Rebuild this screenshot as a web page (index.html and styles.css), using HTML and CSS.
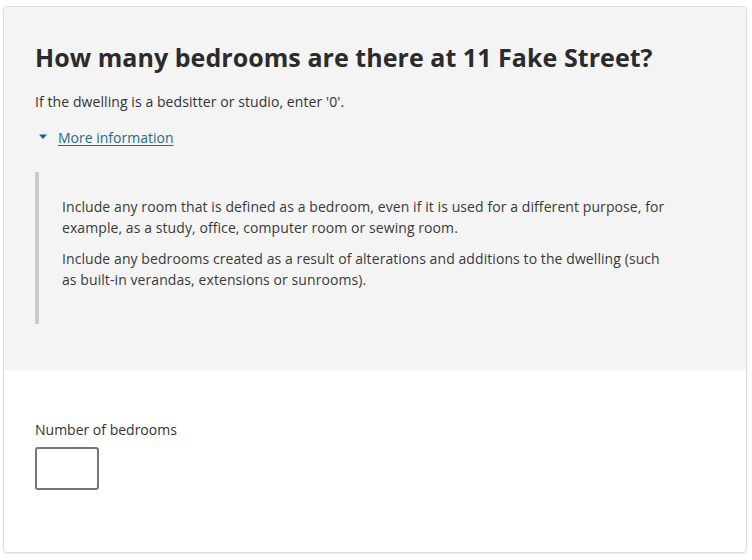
FILE: index.html
```html
<!DOCTYPE html>
<html lang="en">
<head>
<meta charset="utf-8">
<title>Bedrooms</title>
<link rel="stylesheet" href="styles.css">
</head>
<body>
<main class="card">
  <section class="question">
    <h1 class="title">How many bedrooms are there at 11 Fake Street?</h1>
    <p class="hint">If the dwelling is a bedsitter or studio, enter '0'.</p>
    <div class="details">
      <div class="summary">
        <svg class="caret" width="8" height="6" viewBox="0 0 8 6"><path d="M0 0.5h8L4 5z" fill="#1f5f7f"/></svg>
        <a class="more-link" href="#">More information</a>
      </div>
      <div class="panel">
        <p>Include any room that is defined as a bedroom, even if it is used for a different purpose, for example, as a study, office, computer room or sewing room.</p>
        <p>Include any bedrooms created as a result of alterations and additions to the dwelling (such as built-in verandas, extensions or sunrooms).</p>
      </div>
    </div>
  </section>
  <section class="answer">
    <label class="label" for="bedrooms">Number of bedrooms</label>
    <input class="field" id="bedrooms" type="text">
  </section>
</main>
</body>
</html>
```

FILE: styles.css
```css
html, body {
  margin: 0;
  padding: 0;
  background: #ffffff;
}
body {
  padding: 6px 5px 7px 3px;
  font-family: "Open Sans", "Noto Sans", sans-serif;
  color: #333333;
}
.card {
  height: 545px;
  border: 1px solid #dcdcdc;
  border-radius: 4px;
  box-shadow: 0 1px 2px rgba(0,0,0,0.08);
  display: flex;
  flex-direction: column;
  overflow: hidden;
}
.question {
  background: #f4f4f4;
  padding: 35px 31px 46px 31px;
}
.title {
  margin: 0;
  font-size: 25px;
  line-height: 30px;
  font-weight: 700;
  color: #2b2b2b;
  letter-spacing: 0.05px;
}
.hint {
  margin: 20px 0 0 0;
  font-size: 14px;
  line-height: 20px;
  letter-spacing: 0.08px;
}
.details {
  margin-top: 15px;
}
.summary {
  display: flex;
  align-items: center;
  gap: 11px;
  padding-left: 4px;
  height: 20px;
}
.caret {
  display: block;
}
.more-link {
  font-size: 14px;
  color: #1f6b8a;
  text-decoration: underline;
  text-underline-offset: 2px;
}
.panel {
  margin-top: 25px;
  border-left: 4px solid #cccccc;
  padding: 24px 50px 34px 23px;
}
.panel p {
  margin: 0 0 10px 0;
  font-size: 14px;
  line-height: 21px;
  color: #3a3a3a;
  letter-spacing: 0.08px;
}
.panel p:last-child {
  margin-bottom: 0;
}
.answer {
  padding: 50px 31px 0 31px;
  display: flex;
  flex-direction: column;
  align-items: flex-start;
}
.label {
  font-size: 14px;
  line-height: 20px;
  color: #333333;
}
.field {
  margin-top: 7px;
  width: 64px;
  height: 43px;
  box-sizing: border-box;
  border: 2px solid #767676;
  border-radius: 3px;
  background: #ffffff;
}
```
